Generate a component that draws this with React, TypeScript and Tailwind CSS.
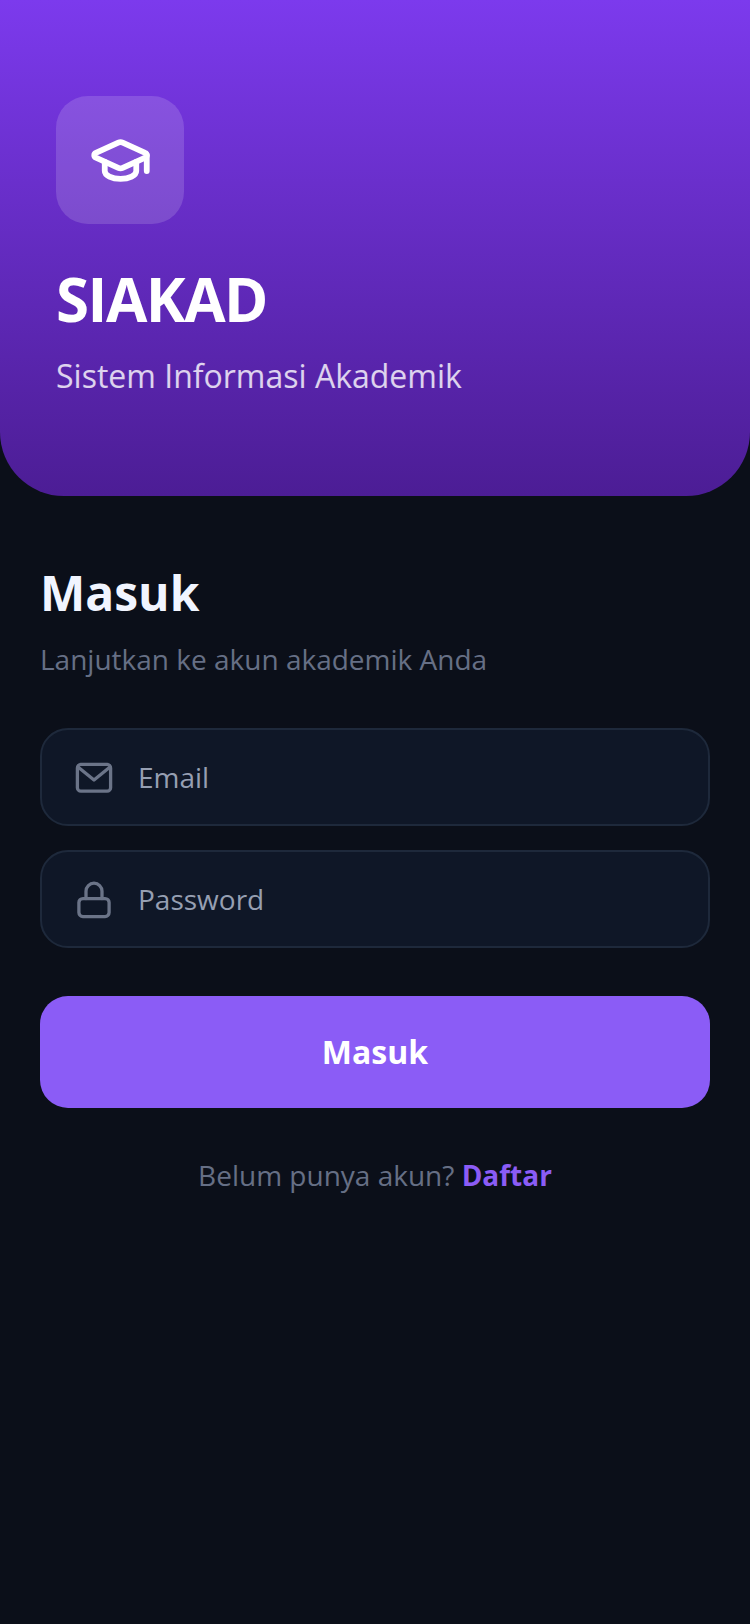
import { GraduationCap } from "lucide-react";

export default function App() {
  return (
    <div className="min-h-[1624px] bg-[#0b0f19] font-['Open_Sans',sans-serif]">
      <header className="h-[496px] rounded-b-[64px] bg-gradient-to-b from-[#7c3aed] to-[#4c1d95] pl-[56px] pt-[96px]">
        <div className="flex h-[128px] w-[128px] items-center justify-center rounded-[32px] bg-white/15">
          <GraduationCap size={63} strokeWidth={2.2} className="text-white" />
        </div>
        <h1 className="mt-[33px] text-[60px] leading-[84px] font-bold tracking-[-1.5px] text-white">SIAKAD</h1>
        <p className="mt-[13px] text-[32px] leading-[44px] text-white/80">Sistem Informasi Akademik</p>
      </header>
      <main className="px-[40px] pt-[64px]">
        <h2 className="text-[48px] leading-[66px] font-bold text-[#f1f5ff]">Masuk</h2>
        <p className="mt-[13px] text-[28px] leading-[40px] text-[#666f85]">Lanjutkan ke akun akademik Anda</p>
        <div className="mt-[49px] flex h-[98px] items-center rounded-[28px] border-2 border-[#1e293b] bg-[#0f1727] pl-[32px]">
          <svg width="40" height="40" viewBox="0 0 40 40" fill="none" stroke="#6b7488" strokeWidth="3.3" strokeLinecap="round" strokeLinejoin="round">
            <rect x="3.4" y="7.4" width="33.2" height="26.8" rx="3.5" />
            <path d="M4 10l16 13 16-13" />
          </svg>
          <span className="ml-[24px] text-[28px] text-[#969fb2]">Email</span>
        </div>
        <div className="mt-[24px] flex h-[98px] items-center rounded-[28px] border-2 border-[#1e293b] bg-[#0f1727] pl-[32px]">
          <svg width="40" height="40" viewBox="0 0 40 40" fill="none" stroke="#6b7488" strokeWidth="3.3" strokeLinecap="round" strokeLinejoin="round">
            <rect x="4.9" y="19.6" width="30.2" height="18" rx="4" />
            <path d="M12 19.6V12.2a8 8 0 0 1 16 0V19.6" />
          </svg>
          <span className="ml-[24px] text-[28px] text-[#969fb2]">Password</span>
        </div>
        <button className="mt-[48px] flex h-[112px] w-full items-center justify-center rounded-[28px] bg-[#8b5cf6] text-[32px] font-bold text-white">Masuk</button>
        <p className="mt-[47px] text-center text-[28px] leading-[40px] text-[#666f85]">
          Belum punya akun? <span className="font-bold text-[#8b5cf6]">Daftar</span>
        </p>
      </main>
    </div>
  );
}
